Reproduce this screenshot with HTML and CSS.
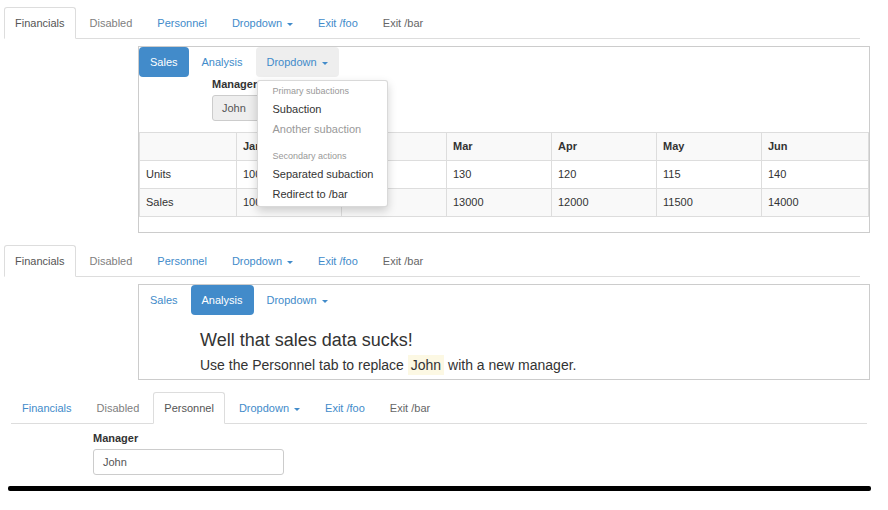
FILE: index.html
```html
<!DOCTYPE html>
<html lang="en">
<head>
<meta charset="utf-8">
<title>Tabs</title>
<link rel="stylesheet" href="styles.css">
</head>
<body>
<section class="sec">
  <ul class="tabs">
    <li class="tab active"><a>Financials</a></li>
    <li class="tab disabled"><a>Disabled</a></li>
    <li class="tab"><a>Personnel</a></li>
    <li class="tab"><a>Dropdown <span class="caret"></span></a></li>
    <li class="tab"><a>Exit /foo</a></li>
    <li class="tab plain"><a>Exit /bar</a></li>
  </ul>
  <div class="panel panel-1">
    <ul class="pills">
      <li class="pill active"><a>Sales</a></li>
      <li class="pill"><a>Analysis</a></li>
      <li class="pill open"><a>Dropdown <span class="caret"></span></a>
        <ul class="menu">
          <li class="hdr">Primary subactions</li>
          <li><a>Subaction</a></li>
          <li class="dis"><a>Another subaction</a></li>
          <li class="divider"></li>
          <li class="hdr">Secondary actions</li>
          <li><a>Separated subaction</a></li>
          <li><a>Redirect to /bar</a></li>
        </ul>
      </li>
    </ul>
    <div class="form form-1">
      <label class="label">Manager</label>
      <div class="input readonly">John</div>
    </div>
    <table class="grid">
      <colgroup><col class="c0"><col class="c1"><col class="c1"><col class="c1"><col class="c1"><col class="c1"><col class="c2"></colgroup>
      <tr class="head"><td></td><td>Jan</td><td>Feb</td><td>Mar</td><td>Apr</td><td>May</td><td>Jun</td></tr>
      <tr><td>Units</td><td>100</td><td>110</td><td>130</td><td>120</td><td>115</td><td>140</td></tr>
      <tr><td>Sales</td><td>10000</td><td>11000</td><td>13000</td><td>12000</td><td>11500</td><td>14000</td></tr>
    </table>
  </div>
</section>

<section class="sec">
  <ul class="tabs">
    <li class="tab active"><a>Financials</a></li>
    <li class="tab disabled"><a>Disabled</a></li>
    <li class="tab"><a>Personnel</a></li>
    <li class="tab"><a>Dropdown <span class="caret"></span></a></li>
    <li class="tab"><a>Exit /foo</a></li>
    <li class="tab plain"><a>Exit /bar</a></li>
  </ul>
  <div class="panel panel-2">
    <ul class="pills">
      <li class="pill"><a>Sales</a></li>
      <li class="pill active"><a>Analysis</a></li>
      <li class="pill"><a>Dropdown <span class="caret"></span></a></li>
    </ul>
    <div class="msg">
      <h3 class="msg-title">Well that sales data sucks!</h3>
      <p class="msg-text">Use the Personnel tab to replace <mark class="hl">John</mark> with a new manager.</p>
    </div>
  </div>
</section>

<section class="sec sec-3">
  <ul class="tabs">
    <li class="tab"><a>Financials</a></li>
    <li class="tab disabled"><a>Disabled</a></li>
    <li class="tab active"><a>Personnel</a></li>
    <li class="tab"><a>Dropdown <span class="caret"></span></a></li>
    <li class="tab"><a>Exit /foo</a></li>
    <li class="tab plain"><a>Exit /bar</a></li>
  </ul>
  <div class="form form-3">
    <label class="label">Manager</label>
    <div class="input">John</div>
  </div>
</section>

<div class="rule"></div>
</body>
</html>
```

FILE: styles.css
```css
* { box-sizing: border-box; }

body {
  margin: 0;
  padding-top: 7px;
  font-family: "Liberation Sans", Arial, sans-serif;
  font-size: 11px;
  color: #333;
  background: #fff;
}

a { text-decoration: none; cursor: pointer; }

.sec {
  width: 856px;
  margin-left: 4px;
}
.sec + .sec { margin-top: 12px; }
.sec-3 { margin-left: 11px; }

/* tabs */
.tabs {
  display: flex;
  list-style: none;
  margin: 0;
  padding: 0;
  border-bottom: 1px solid #ddd;
}
.tab {
  margin-right: 3px;
  margin-bottom: -1px;
}
.tab > a {
  display: block;
  padding: 7px 10px;
  line-height: 16px;
  border: 1px solid transparent;
  border-radius: 3px 3px 0 0;
  color: #428bca;
}
.tab.active > a {
  color: #555;
  background: #fff;
  border-color: #ddd #ddd transparent;
}
.tab.disabled > a { color: #808080; }
.tab.plain > a { color: #666; }

.caret {
  display: inline-block;
  width: 0;
  height: 0;
  margin-left: 2px;
  vertical-align: middle;
  border-top: 3px solid;
  border-left: 3px solid transparent;
  border-right: 3px solid transparent;
}

/* panel */
.panel {
  margin: 7px 0 0 134px;
  width: 732px;
  border: 1px solid #ccc;
}
.panel-1 { padding-bottom: 15px; }
.panel-2 { padding-bottom: 4px; }

/* pills */
.pills {
  display: flex;
  list-style: none;
  margin: 0;
  padding: 0;
}
.pill {
  position: relative;
  margin-right: 2px;
}
.pill > a {
  display: block;
  padding: 7px 11px;
  line-height: 16px;
  border-radius: 4px;
  color: #428bca;
}
.pill.active > a { background: #428bca; color: #fff; }
.pill.open > a { background: #eee; }

/* dropdown menu */
.menu {
  position: absolute;
  top: calc(100% + 3px);
  left: 1px;
  z-index: 10;
  width: 131px;
  margin: 0;
  padding: 3px 0 2px;
  list-style: none;
  background: #fff;
  border: 1px solid rgba(0, 0, 0, 0.15);
  border-radius: 3px;
  box-shadow: 0 4px 10px rgba(0, 0, 0, 0.18);
}
.menu .hdr {
  padding: 0 15px;
  font-size: 9px;
  line-height: 15px;
  color: #999;
}
.menu a {
  display: block;
  padding: 0 15px;
  line-height: 20px;
  color: #333;
  white-space: nowrap;
}
.menu .dis a { color: #999; }
.menu .divider { height: 1px; margin: 5px 0 4px; }

/* forms */
.label {
  display: block;
  font-weight: bold;
  line-height: 14px;
  margin-bottom: 4px;
  color: #333;
}
.input {
  width: 191px;
  height: 26px;
  padding: 0 9px;
  line-height: 24px;
  border: 1px solid #ccc;
  border-radius: 3px;
  color: #555;
  background: #fff;
}
.input.readonly { width: 160px; background: #eee; }

.form-1 { padding-left: 73px; }
.form-3 { margin: 7px 0 0 82px; }

/* table */
.grid {
  width: 729px;
  margin-top: 11px;
  border-collapse: collapse;
  table-layout: fixed;
}
.grid .c0 { width: 97px; }
.grid .c1 { width: 105px; }
.grid .c2 { width: 107px; }
.grid td {
  padding: 6px;
  line-height: 15px;
  border: 1px solid #ddd;
  text-align: left;
}
.grid tr:nth-child(odd) td { background: #f9f9f9; }
.grid .head td { font-weight: bold; }

/* analysis message */
.msg { padding-left: 61px; }
.msg-title {
  margin: 15px 0 0;
  font-size: 18px;
  line-height: 20px;
  font-weight: normal;
  color: #333;
}
.msg-text {
  margin: 5px 0 0;
  font-size: 14px;
  line-height: 20px;
  color: #333;
}
.hl {
  background: #fcf8e3;
  color: #333;
  padding: 2px 3px;
}

.rule {
  width: 863px;
  height: 5px;
  margin: 11px 0 0 8px;
  background: #000;
  border-radius: 2px;
}
```
